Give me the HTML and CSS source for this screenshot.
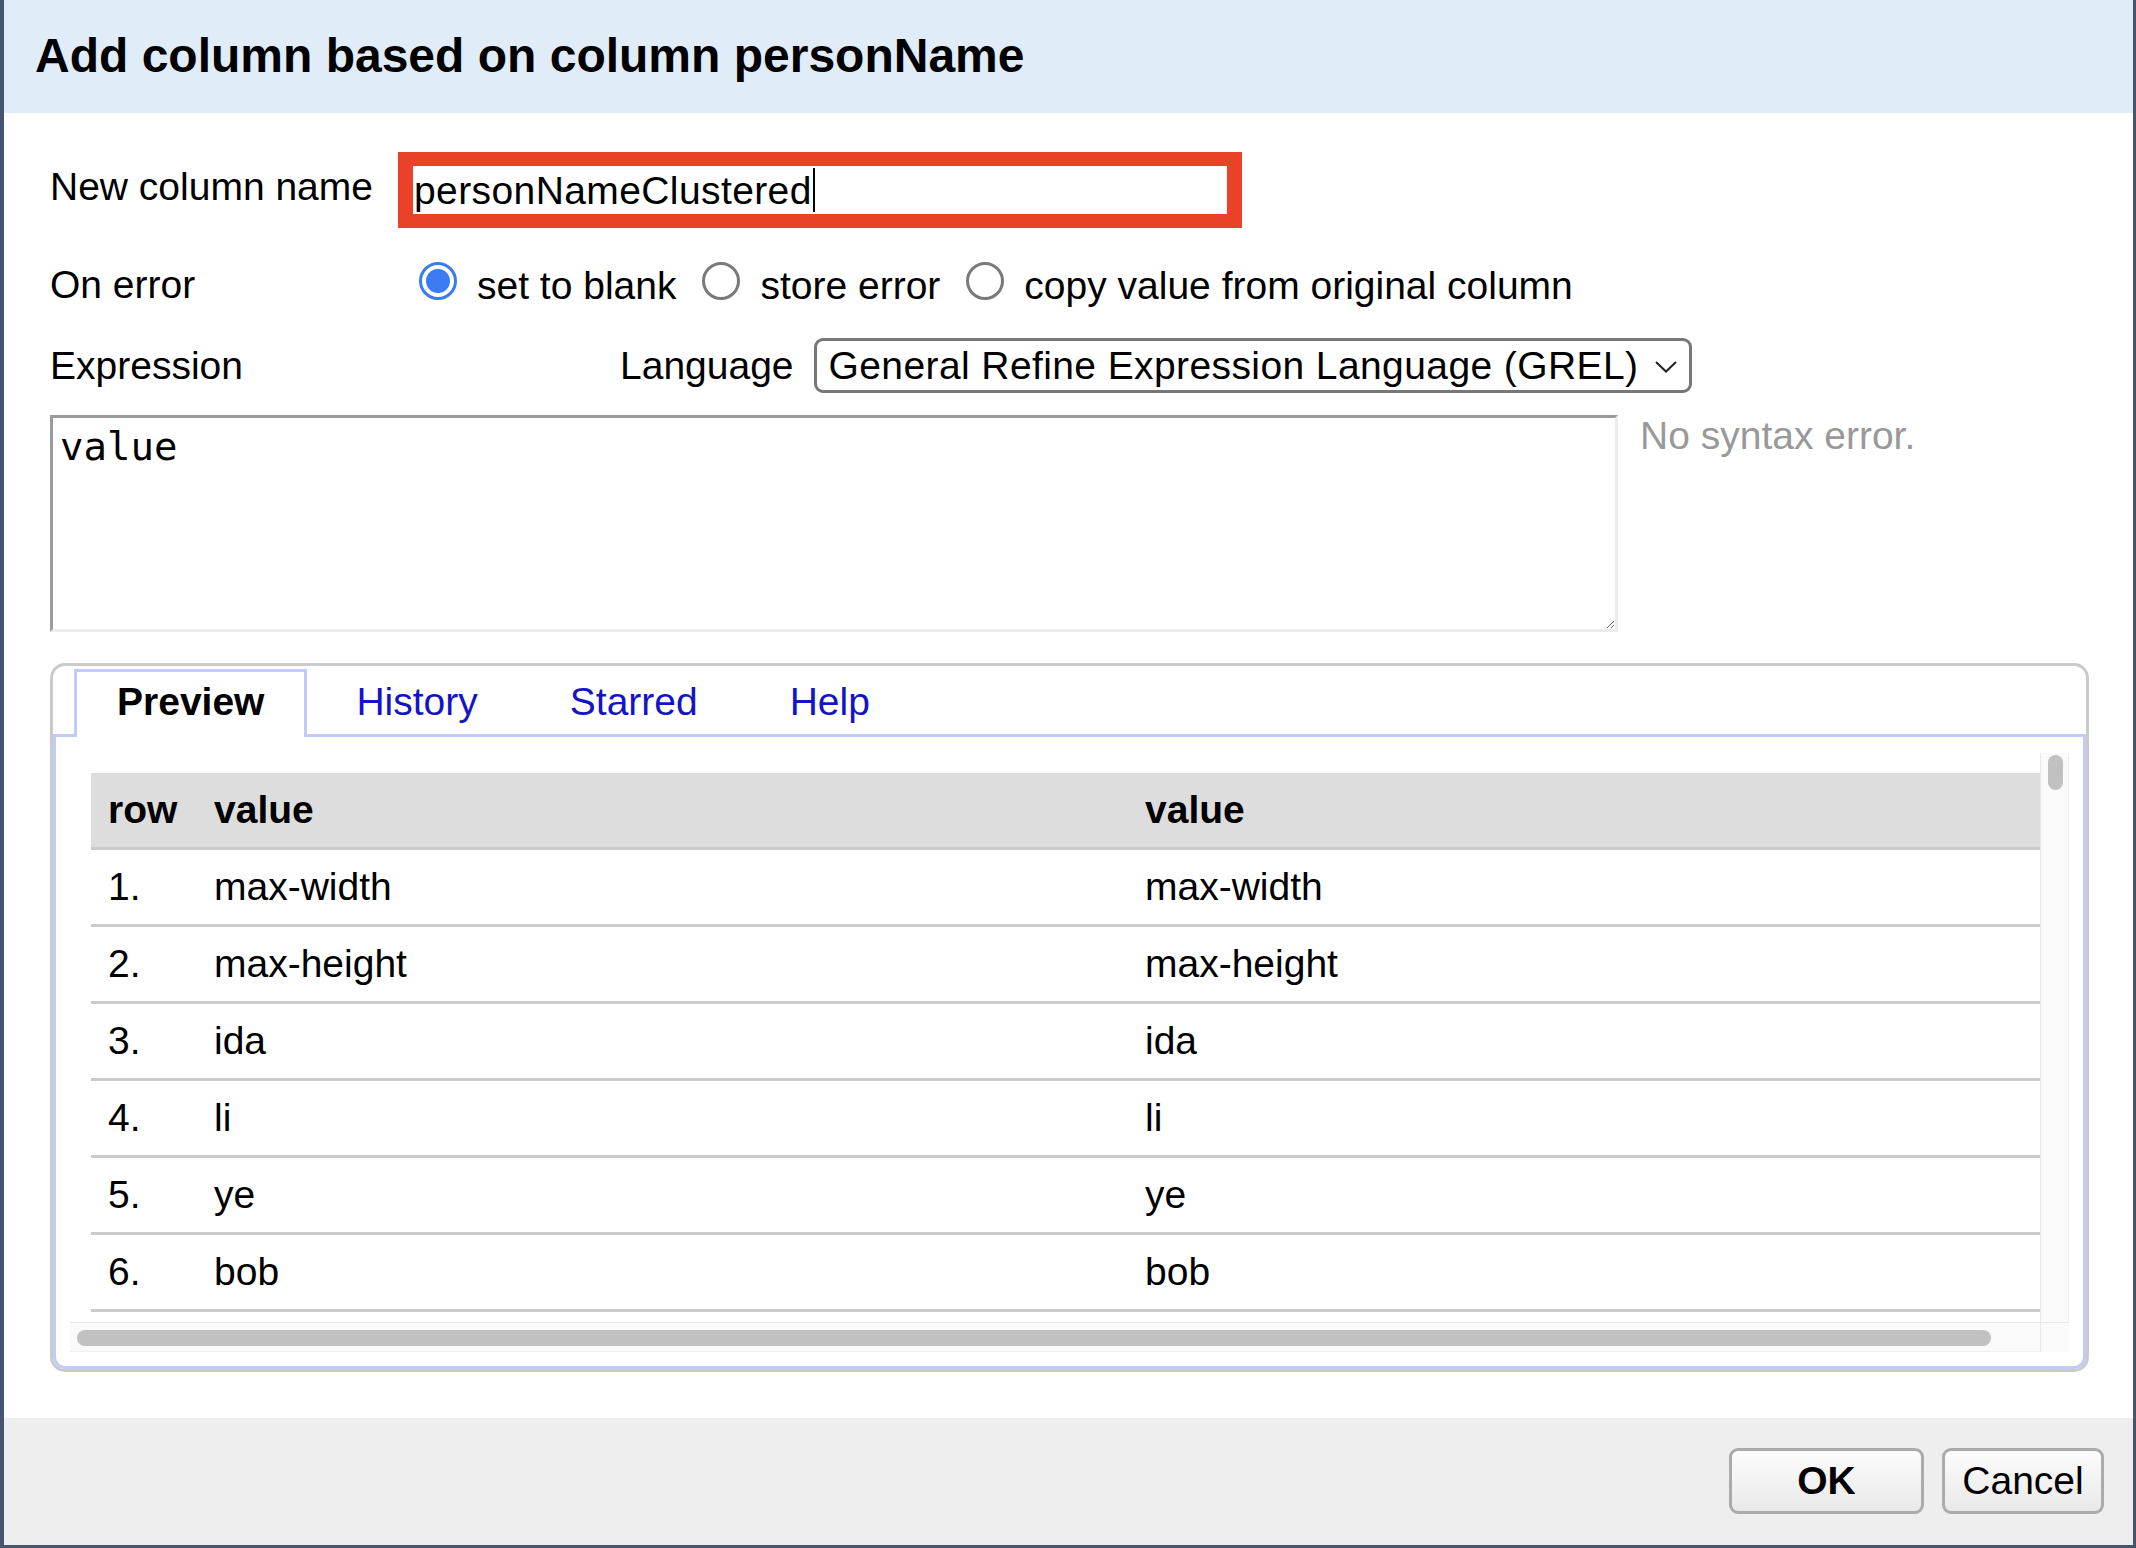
FILE: index.html
```html
<!DOCTYPE html>
<html lang="en">
<head>
<meta charset="utf-8">
<title>Add column based on column personName</title>
<link rel="stylesheet" href="styles.css">
</head>
<body>
<div class="dialog">
  <header class="dialog-header">
    <h1>Add column based on column personName</h1>
  </header>
  <main class="dialog-body">
    <div class="form-row row-name">
      <label class="field-label">New column name</label>
      <div class="name-input"><span class="name-text">personNameClustered</span><span class="caret"></span></div>
    </div>
    <div class="form-row row-error">
      <span class="field-label">On error</span>
      <div class="radios">
        <label class="radio-opt"><input type="radio" name="onerror" checked>set to blank</label>
        <label class="radio-opt"><input type="radio" name="onerror">store error</label>
        <label class="radio-opt"><input type="radio" name="onerror">copy value from original column</label>
      </div>
    </div>
    <div class="form-row row-expr">
      <span class="field-label">Expression</span>
      <span class="lang-label">Language</span>
      <div class="select">
        <span class="select-text">General Refine Expression Language (GREL)</span>
        <svg class="chevron" width="22" height="12" viewBox="0 0 22 12"><polyline points="1,1 11,10.5 21,1" fill="none" stroke="#222" stroke-width="2"/></svg>
      </div>
    </div>
    <div class="expr-row">
      <textarea class="expr" spellcheck="false">value</textarea>
      <div class="status">No syntax error.</div>
    </div>
    <div class="tabs">
      <ul class="tab-nav">
        <li class="tab active">Preview</li>
        <li class="tab"><a href="#">History</a></li>
        <li class="tab"><a href="#">Starred</a></li>
        <li class="tab"><a href="#">Help</a></li>
      </ul>
      <div class="tab-panel">
        <div class="scroll">
          <div class="scroll-content">
            <table class="preview">
              <colgroup><col class="c-row"><col class="c-val"><col></colgroup>
              <thead>
                <tr><th>row</th><th>value</th><th>value</th></tr>
              </thead>
              <tbody>
                <tr><td>1.</td><td>max-width</td><td>max-width</td></tr>
                <tr><td>2.</td><td>max-height</td><td>max-height</td></tr>
                <tr><td>3.</td><td>ida</td><td>ida</td></tr>
                <tr><td>4.</td><td>li</td><td>li</td></tr>
                <tr><td>5.</td><td>ye</td><td>ye</td></tr>
                <tr><td>6.</td><td>bob</td><td>bob</td></tr>
              </tbody>
            </table>
          </div>
          <div class="vbar"><div class="vthumb"></div></div>
          <div class="hbar"><div class="hthumb"></div></div>
          <div class="corner"></div>
        </div>
      </div>
    </div>
  </main>
  <footer class="dialog-footer">
    <button class="btn btn-ok">OK</button>
    <button class="btn btn-cancel">Cancel</button>
  </footer>
</div>
</body>
</html>
```
FILE: styles.css
```css
html, body {
  margin: 0;
  padding: 0;
  background: #fff;
}
body {
  font-family: "Liberation Sans", Arial, Helvetica, sans-serif;
  font-size: 39px;
  line-height: 45px;
  color: #000;
}
.dialog {
  width: 2136px;
  height: 1548px;
  box-sizing: border-box;
  border-left: 4px solid #45566c;
  border-right: 3px solid #45566c;
  border-bottom: 3px solid #45566c;
  display: flex;
  flex-direction: column;
  overflow: hidden;
  background: #fff;
}
.dialog-header {
  height: 113px;
  flex: none;
  box-sizing: border-box;
  padding: 28px 0 0 31px;
  background: #e1ecf9;
}
.dialog-header h1 {
  margin: 0;
  font-size: 48px;
  line-height: 55px;
  font-weight: bold;
}
.dialog-body {
  flex: 1;
  padding: 39px 44px 0 46px;
}
.form-row {
  display: flex;
  align-items: center;
}
.field-label {
  width: 348px;
  flex: none;
}
.row-name {
  height: 76px;
}
.row-name .field-label {
  margin-bottom: 8px;
}
.name-input {
  width: 844px;
  height: 76px;
  box-sizing: border-box;
  border-style: solid;
  border-color: #ea4129;
  border-width: 14px 15px 14px 15px;
  padding-left: 1px;
  display: flex;
  align-items: center;
  background: #fff;
}
.name-text {
  letter-spacing: 0.4px;
}
.caret {
  display: inline-block;
  width: 2px;
  height: 44px;
  background: #000;
  margin-left: 1px;
}
.row-error {
  margin-top: 34px;
  height: 45px;
  align-items: flex-start;
}
.radios {
  display: flex;
  white-space: nowrap;
}
.radio-opt {
  margin-left: 26px;
}
.radio-opt:first-child {
  margin-left: 21px;
}
.radio-opt input {
  -webkit-appearance: none;
  appearance: none;
  width: 38px;
  height: 38px;
  box-sizing: border-box;
  margin: 0 20px 0 0;
  border: 3px solid #7a7a7a;
  border-radius: 50%;
  background: #fff;
  vertical-align: -1px;
}
.radio-opt input:checked {
  border-color: #3b7bf4;
  background: radial-gradient(circle, #3b7bf4 0 11.5px, #fff 12.5px);
}
.row-expr {
  margin-top: 31px;
  height: 55px;
}
.lang-label {
  margin-left: 222px;
  margin-right: 20px;
}
.select {
  width: 878px;
  height: 55px;
  box-sizing: border-box;
  border: 3px solid #777;
  border-radius: 9px;
  padding: 0 12px;
  display: flex;
  align-items: center;
  justify-content: space-between;
  white-space: nowrap;
  background: #fff;
}
.select-text {
  letter-spacing: 0.4px;
}
.chevron {
  flex: none;
  margin-top: 2px;
}
.expr-row {
  margin-top: 22px;
  display: flex;
  align-items: flex-start;
}
.expr {
  width: 1568px;
  height: 217px;
  box-sizing: border-box;
  margin: 0;
  padding: 6px 7px 7px;
  border-style: solid;
  border-width: 3px;
  border-color: #9b9b9b #ececec #ececec #9b9b9b;
  font-family: "DejaVu Sans Mono", "Liberation Mono", monospace;
  font-size: 39px;
  line-height: 45px;
  color: #000;
  background: #fff;
  outline: none;
}
.status {
  margin-left: 22px;
  margin-top: -2px;
  color: #999;
}
.tabs {
  margin-top: 31px;
  width: 2039px;
  box-sizing: border-box;
  border: 3px solid #cacaca;
  border-radius: 15px;
  background: #fff;
}
.tab-nav {
  list-style: none;
  margin: 0;
  padding: 3px 21px 0;
  display: flex;
}
.tab {
  position: relative;
  padding: 0 40px 5px;
  line-height: 60px;
  border: 3px solid transparent;
  border-bottom: 0;
  margin: 0 6px -3px 0;
}
.tab.active {
  z-index: 1;
  font-weight: bold;
  border-color: #c0cbf8;
  background: #fff;
}
.tab a {
  color: #1414c6;
  text-decoration: none;
}
.tab-panel {
  border: 3px solid #c0cbf8;
  border-radius: 0 0 12px 12px;
  padding: 16px 14px 14px;
}
.scroll {
  display: grid;
  grid-template-columns: 1fr 29px;
  grid-template-rows: 569px 30px;
}
.scroll-content {
  overflow: hidden;
  padding: 20px 0 0 21px;
}
.preview {
  width: 2000px;
  table-layout: fixed;
  border-collapse: separate;
  border-spacing: 0;
}
.c-row {
  width: 106px;
}
.c-val {
  width: 931px;
}
.preview th,
.preview td {
  height: 74px;
  padding: 0 0 2px 17px;
  box-sizing: content-box;
  text-align: left;
  vertical-align: middle;
  border-bottom: 3px solid #cbcbcb;
  white-space: nowrap;
}
.preview th {
  background: #dddddd;
  font-weight: bold;
}
.preview td {
  height: 72px;
}
.preview th {
  height: 72px;
  padding-bottom: 2px;
}
.vbar {
  background: #fafafa;
  border-left: 1px solid #e8e8e8;
  border-right: 1px solid #efefef;
  padding: 2px 0 0 7px;
}
.vthumb {
  width: 15px;
  height: 35px;
  border-radius: 8px;
  background: #c1c1c1;
}
.hbar {
  background: #fafafa;
  border-top: 1px solid #e8e8e8;
  border-bottom: 1px solid #efefef;
  padding: 7px 0 0 7px;
}
.hthumb {
  width: 1914px;
  height: 16px;
  border-radius: 8px;
  background: #c1c1c1;
}
.corner {
  background: #fafafa;
  border-top: 1px solid #e8e8e8;
  border-left: 1px solid #e8e8e8;
}
.dialog-footer {
  flex: none;
  height: 127px;
  box-sizing: border-box;
  background: #eeeeee;
  display: flex;
  justify-content: flex-end;
  align-items: flex-start;
  gap: 18px;
  padding: 30px 29px 0 0;
}
.btn {
  height: 66px;
  box-sizing: border-box;
  border: 3px solid #ababab;
  border-radius: 9px;
  background: linear-gradient(#fcfcfc, #e9e9e9);
  font-family: "Liberation Sans", Arial, Helvetica, sans-serif;
  font-size: 39px;
  line-height: 45px;
  color: #000;
  padding: 0 0 2px;
  margin: 0;
}
.btn-ok {
  width: 195px;
  font-weight: bold;
}
.btn-cancel {
  width: 162px;
}
```
